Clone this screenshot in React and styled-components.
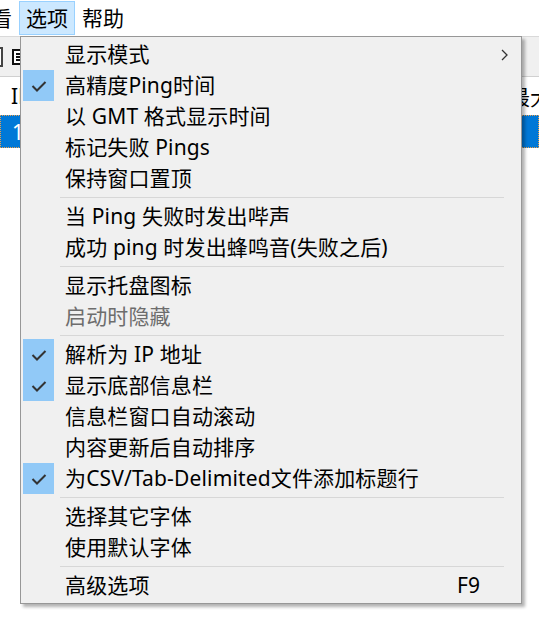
import React from "react";
import styled, { createGlobalStyle } from "styled-components";

const GlobalStyle = createGlobalStyle`
  html, body {
    margin: 0;
    padding: 0;
    background: #ffffff;
  }
  body {
    font-family: "Noto Sans", "Noto Sans CJK SC", sans-serif;
    color: #000000;
  }
`;

const Page = styled("div")`
  position: relative;
  width: 539px;
  height: 627px;
  overflow: hidden;
  background: #ffffff;
`;

const MenuBar = styled("div")`
  display: flex;
  align-items: center;
  height: 36px;
  margin-left: -37px;
`;

const BarItem = styled("div")`
  height: 32px;
  padding: 0 6px;
  display: flex;
  align-items: center;
  font-size: 21px;
  line-height: 1;
  border: 1px solid ${({ $active }) => ($active ? "#99d1ff" : "transparent")};
  background: ${({ $active }) => ($active ? "#cce8ff" : "transparent")};
`;

const Toolbar = styled("div")`
  display: flex;
  align-items: center;
  gap: 9px;
  height: 39px;
  margin-left: -8px;
  background: #f0f0f0;
  border-top: 1px solid #d9d9d9;
  border-bottom: 1px solid #d0d0d0;
`;

const ToolIcon = styled("svg")`
  display: block;
`;

const ListHeader = styled("div")`
  display: flex;
  align-items: center;
  height: 38px;
  padding-left: 11px;
  font-size: 21px;
  background: #ffffff;
`;

const HeaderCell = styled("span")`
  margin-left: auto;
  margin-right: ${({ $right }) => $right || 0}px;
  white-space: nowrap;
`;

const ListRow = styled("div")`
  display: flex;
  align-items: center;
  height: 31px;
  padding-left: 11px;
  font-size: 21px;
  color: #ffffff;
  background: #0078d7;
  border: 1px dotted #e8a050;
`;

const Menu = styled("div")`
  position: absolute;
  left: 20px;
  top: 36px;
  width: 502px;
  padding: 2px;
  box-sizing: border-box;
  background: #f0f0f0;
  border: 1px solid #979797;
  box-shadow: 3px 3px 3px rgba(0, 0, 0, 0.3);
`;

const Item = styled("div")`
  display: flex;
  align-items: center;
  height: 31px;
  font-size: 21px;
  line-height: 31px;
  color: ${({ $disabled }) => ($disabled ? "#6d6d6d" : "#000000")};
`;

const CheckCell = styled("div")`
  width: 31px;
  height: 31px;
  flex: none;
  display: flex;
  align-items: center;
  justify-content: center;
  background: ${({ $on }) => ($on ? "#91c9f7" : "transparent")};
`;

const Label = styled("span")`
  flex: 1;
  margin-left: 11px;
  white-space: nowrap;
  letter-spacing: 0.15px;
`;

const Shortcut = styled("span")`
  margin-right: 39px;
`;

const Arrow = styled("svg")`
  margin-right: 11px;
`;

const Separator = styled("div")`
  height: 7px;
  display: flex;
  align-items: center;
  margin: 0 15px 0 37px;

  &::after {
    content: "";
    flex: 1;
    height: 1px;
    background: #d7d7d7;
  }
`;

const Check = () => (
  <svg width="16" height="12" viewBox="0 0 16 12">
    <polyline
      points="1.5,6 6,10.5 14.5,2"
      fill="none"
      stroke="#333333"
      strokeWidth="2"
    />
  </svg>
);

const items = [
  { label: "显示模式", submenu: true },
  { label: "高精度Ping时间", checked: true },
  { label: "以 GMT 格式显示时间" },
  { label: "标记失败 Pings" },
  { label: "保持窗口置顶" },
  "sep",
  { label: "当 Ping 失败时发出哔声" },
  { label: "成功 ping 时发出蜂鸣音(失败之后)" },
  "sep",
  { label: "显示托盘图标" },
  { label: "启动时隐藏", disabled: true },
  "sep",
  { label: "解析为 IP 地址", checked: true },
  { label: "显示底部信息栏", checked: true },
  { label: "信息栏窗口自动滚动" },
  { label: "内容更新后自动排序" },
  { label: "为CSV/Tab-Delimited文件添加标题行", checked: true },
  "sep",
  { label: "选择其它字体" },
  { label: "使用默认字体" },
  "sep",
  { label: "高级选项", shortcut: "F9" },
];

export default function App() {
  return (
    <Page>
      <GlobalStyle />
      <MenuBar>
        <BarItem>查看</BarItem>
        <BarItem $active>选项</BarItem>
        <BarItem>帮助</BarItem>
      </MenuBar>
      <Toolbar>
        <ToolIcon width="11" height="20" viewBox="0 0 11 20">
          <rect x="0" y="1" width="10" height="18" fill="#ffffff" stroke="#444" strokeWidth="2" />
        </ToolIcon>
        <ToolIcon width="12" height="16" viewBox="0 0 12 16">
          <rect x="1" y="1" width="10" height="14" fill="#ffffff" stroke="#111" strokeWidth="2" />
          <rect x="4" y="4" width="5" height="2" fill="#111" />
          <rect x="4" y="7" width="5" height="2" fill="#111" />
          <rect x="4" y="10" width="5" height="2" fill="#111" />
        </ToolIcon>
      </Toolbar>
      <ListHeader>
        <span>IP</span>
        <HeaderCell $right={-12}>最大</HeaderCell>
      </ListHeader>
      <ListRow>1</ListRow>

      <Menu>
        {items.map((it, i) =>
          it === "sep" ? (
            <Separator key={i} />
          ) : (
            <Item key={i} $disabled={it.disabled}>
              <CheckCell $on={it.checked}>{it.checked && <Check />}</CheckCell>
              <Label>{it.label}</Label>
              {it.shortcut && <Shortcut>{it.shortcut}</Shortcut>}
              {it.submenu && (
                <Arrow width="7" height="12" viewBox="0 0 7 12">
                  <polyline points="1,1 6,6 1,11" fill="none" stroke="#333" strokeWidth="1.3" />
                </Arrow>
              )}
            </Item>
          )
        )}
      </Menu>
    </Page>
  );
}
